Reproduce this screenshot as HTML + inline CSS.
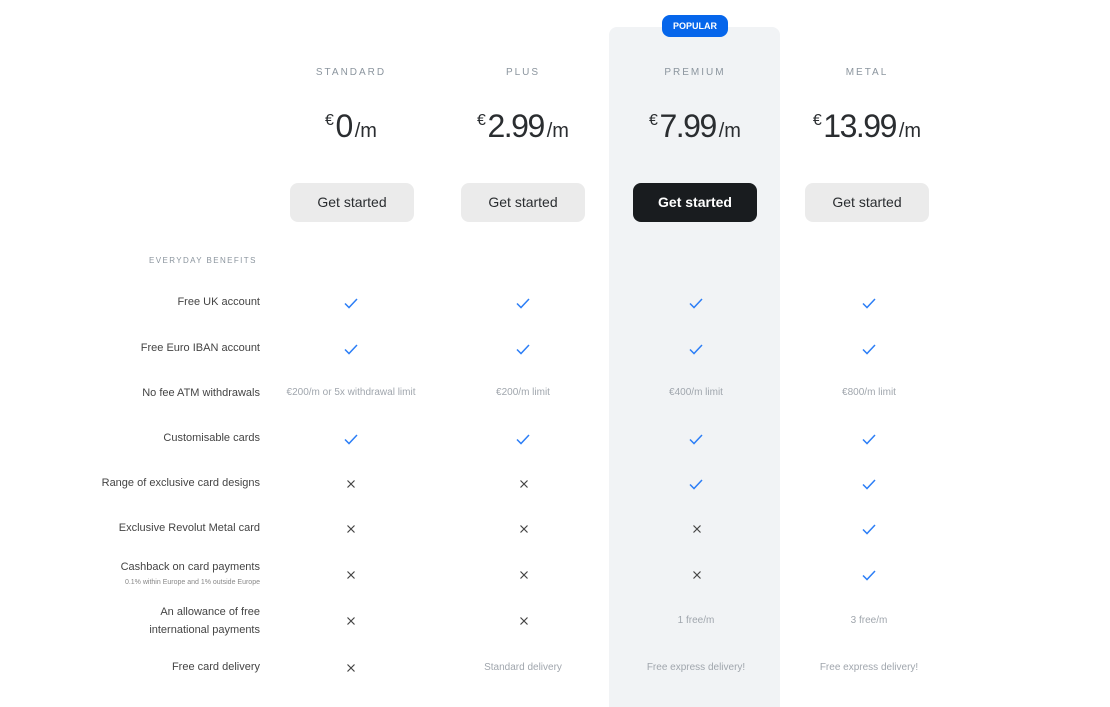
<!DOCTYPE html>
<html><head><meta charset="utf-8"><style>
body{margin:0;width:1110px;height:699px;background:#fff;position:relative;overflow:hidden;font-family:"Liberation Sans",sans-serif;}
.a{position:absolute}
.prem{left:609px;top:27px;width:171px;height:680px;background:#f1f3f5;border-radius:8px 8px 0 0}
.badge{left:662px;top:15px;width:66px;height:22px;background:#0666eb;border-radius:8px;color:#fff;font-size:9px;font-weight:bold;text-align:center;line-height:22px}
.plan{width:172px;text-align:center;top:67px;font-size:10px;letter-spacing:2px;color:#8b959e}
.price{width:172px;text-align:center;top:108px;font-size:32px;color:#2a2d30;letter-spacing:-1.5px;white-space:nowrap}
.price sup{font-size:16px;vertical-align:12px;margin-right:3px}
.price small{font-size:20px;letter-spacing:0;margin-left:3px}
.btn{top:183px;width:124px;height:39px;border-radius:8px;background:#ebebeb;color:#2a2d30;font-size:14px;text-align:center;line-height:39px}
.lbl{right:850px;text-align:right;font-size:11px;color:#444;white-space:nowrap;line-height:18px}
.cell{width:172px;text-align:center;font-size:10px;color:#a0a6ad;line-height:14px}
</style></head><body>
<div class="a prem"></div>
<div class="a badge">POPULAR</div>
<div class="a plan" style="left:265px">STANDARD</div>
<div class="a plan" style="left:437px">PLUS</div>
<div class="a plan" style="left:609px">PREMIUM</div>
<div class="a plan" style="left:781px">METAL</div>
<div class="a price" style="left:265px"><sup>€</sup>0<small>/m</small></div>
<div class="a price" style="left:437px"><sup>€</sup>2.99<small>/m</small></div>
<div class="a price" style="left:609px"><sup>€</sup>7.99<small>/m</small></div>
<div class="a price" style="left:781px"><sup>€</sup>13.99<small>/m</small></div>
<div class="a btn" style="left:290px">Get started</div>
<div class="a btn" style="left:461px">Get started</div>
<div class="a btn" style="left:633px;background:#191c1f;color:#fff;font-weight:bold">Get started</div>
<div class="a btn" style="left:805px">Get started</div>
<div class="a" style="left:149px;top:256px;font-size:8px;letter-spacing:1.4px;color:#8b959e">EVERYDAY BENEFITS</div>

<div class="a lbl" style="top:293px">Free UK account</div>
<div class="a lbl" style="top:339px">Free Euro IBAN account</div>
<div class="a lbl" style="top:384px">No fee ATM withdrawals</div>
<div class="a lbl" style="top:429px">Customisable cards</div>
<div class="a lbl" style="top:474px">Range of exclusive card designs</div>
<div class="a lbl" style="top:519px">Exclusive Revolut Metal card</div>
<div class="a lbl" style="top:558px">Cashback on card payments</div>
<div class="a lbl" style="top:577px;font-size:7px;line-height:12px;color:#888">0.1% within Europe and 1% outside Europe</div>
<div class="a lbl" style="top:603px">An allowance of free</div>
<div class="a lbl" style="top:621px">international payments</div>
<div class="a lbl" style="top:658px">Free card delivery</div>

<svg class="a" style="left:0;top:0" width="1110" height="699">
<defs>
<path id="c" d="M-6 0.5 L-2 4.5 L6 -4" fill="none" stroke="#2c7ef6" stroke-width="1.5"/>
<path id="x" d="M-3.5 -3.5 L3.5 3.5 M3.5 -3.5 L-3.5 3.5" stroke="#444" stroke-width="1.2"/>
</defs>
<g>
<use href="#c" x="351" y="303"/><use href="#c" x="523" y="303"/><use href="#c" x="696" y="303"/><use href="#c" x="869" y="303"/>
<use href="#c" x="351" y="349"/><use href="#c" x="523" y="349"/><use href="#c" x="696" y="349"/><use href="#c" x="869" y="349"/>
<use href="#c" x="351" y="439"/><use href="#c" x="523" y="439"/><use href="#c" x="696" y="439"/><use href="#c" x="869" y="439"/>
<use href="#x" x="351" y="484"/><use href="#x" x="524" y="484"/><use href="#c" x="696" y="484"/><use href="#c" x="869" y="484"/>
<use href="#x" x="351" y="529"/><use href="#x" x="524" y="529"/><use href="#x" x="697" y="529"/><use href="#c" x="869" y="529"/>
<use href="#x" x="351" y="575"/><use href="#x" x="524" y="575"/><use href="#x" x="697" y="575"/><use href="#c" x="869" y="575"/>
<use href="#x" x="351" y="621"/><use href="#x" x="524" y="621"/>
<use href="#x" x="351" y="668"/>
</g>
</svg>
<div class="a cell" style="left:265px;top:386px">€200/m or 5x withdrawal limit</div>
<div class="a cell" style="left:437px;top:386px">€200/m limit</div>
<div class="a cell" style="left:610px;top:386px">€400/m limit</div>
<div class="a cell" style="left:783px;top:386px">€800/m limit</div>
<div class="a cell" style="left:610px;top:614px">1 free/m</div>
<div class="a cell" style="left:783px;top:614px">3 free/m</div>
<div class="a cell" style="left:437px;top:661px">Standard delivery</div>
<div class="a cell" style="left:610px;top:661px">Free express delivery!</div>
<div class="a cell" style="left:783px;top:661px">Free express delivery!</div>
</body></html>
